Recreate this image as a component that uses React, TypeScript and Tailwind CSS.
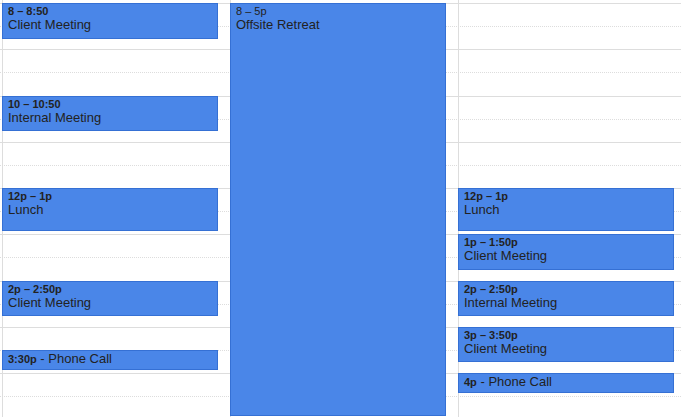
import React from 'react';

type CalEvent = {
  start: number;
  end: number;
  time: string;
  title: string;
  compact?: boolean;
  lightTime?: boolean;
};

const HOUR = 46.25;
const TOP = 3;
const y = (h: number) => TOP + (h - 8) * HOUR;

const columns: CalEvent[][] = [
  [
    { start: 8, end: 8 + 50 / 60, time: '8 – 8:50', title: 'Client Meeting' },
    { start: 10, end: 10 + 50 / 60, time: '10 – 10:50', title: 'Internal Meeting' },
    { start: 12, end: 13, time: '12p – 1p', title: 'Lunch' },
    { start: 14, end: 14 + 50 / 60, time: '2p – 2:50p', title: 'Client Meeting' },
    { start: 15.5, end: 16, time: '3:30p', title: 'Phone Call', compact: true },
  ],
  [{ start: 8, end: 17, time: '8 – 5p', title: 'Offsite Retreat', lightTime: true }],
  [
    { start: 12, end: 13, time: '12p – 1p', title: 'Lunch' },
    { start: 13, end: 13 + 50 / 60, time: '1p – 1:50p', title: 'Client Meeting' },
    { start: 14, end: 14 + 50 / 60, time: '2p – 2:50p', title: 'Internal Meeting' },
    { start: 15, end: 15 + 50 / 60, time: '3p – 3:50p', title: 'Client Meeting' },
    { start: 16, end: 16.5, time: '4p', title: 'Phone Call', compact: true },
  ],
];

const slots = Array.from({ length: 20 }, (_, i) => i);

const EventBox: React.FC<{ ev: CalEvent }> = ({ ev }) => (
  <div
    className="absolute left-[-1px] w-[216px] overflow-hidden border border-[#3570d4] bg-[#4a86e8] px-[5px] text-[#222]"
    style={{ top: y(ev.start), height: (ev.end - ev.start) * HOUR - 3 }}
  >
    {ev.compact ? (
      <div className="whitespace-nowrap text-[13px] leading-[15px]">
        <span className="text-[11px] font-bold">{ev.time}</span> - {ev.title}
      </div>
    ) : (
      <>
        <div className={`pt-[1px] text-[11px] leading-[13px] ${ev.lightTime ? 'font-normal' : 'font-bold'}`}>{ev.time}</div>
        <div className="text-[13px] leading-[14px]">{ev.title}</div>
      </>
    )}
  </div>
);

export default function App() {
  return (
    <div className="relative h-[417px] w-[681px] overflow-hidden bg-white font-['Liberation_Sans',Arial,sans-serif]">
      <div className="pt-[3px]">
        {slots.map(i => (
          <div
            key={i}
            className={`h-[23.125px] border-t border-[#dddddd] ${i % 2 === 0 ? 'border-solid' : 'border-dotted'}`}
          />
        ))}
      </div>

      <div className="absolute inset-y-0 left-[2px] right-0 grid grid-cols-[228px_228px_1fr]">
        {columns.map((col, ci) => (
          <div key={ci} className="relative border-l border-[#dddddd]">
            {col.map((ev, ei) => (
              <EventBox key={ei} ev={ev} />
            ))}
          </div>
        ))}
      </div>
    </div>
  );
}
